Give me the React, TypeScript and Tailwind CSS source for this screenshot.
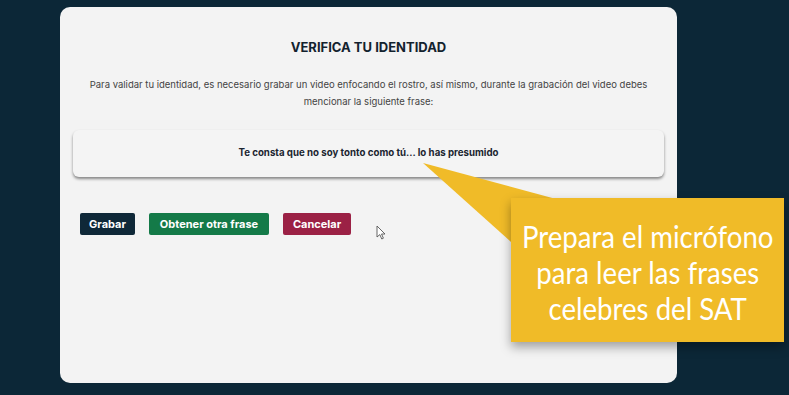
import React from 'react'

const body = { fontFamily: 'Inter, "Noto Sans", sans-serif' }

export default function App() {
  return (
    <div className="relative h-[395px] w-[789px] overflow-hidden bg-[#0c2737] pl-[60px] pt-[7px]" style={body}>
      <div className="flex h-[376px] w-[617px] flex-col rounded-[10px] bg-[#f3f3f3] pt-[31px]">
        <h1 className="text-center text-[13px] font-bold leading-[18px] text-[#13222e]">VERIFICA TU IDENTIDAD</h1>
        <p className="mx-auto mt-[20px] w-[570px] text-center text-[9.5px] leading-[17px] text-[#444]">
          Para validar tu identidad, es necesario grabar un video enfocando el rostro, así mismo, durante la grabación del video debes mencionar la siguiente frase:
        </p>
        <div className="mx-[13px] mt-[20px] flex h-[47px] items-center justify-center rounded-[6px] bg-[#f4f4f4] shadow-[0_2px_3px_rgba(0,0,0,0.45)]">
          <span className="text-[9.7px] font-bold text-[#1b2530]">Te consta que no soy tonto como tú... lo has presumido</span>
        </div>
        <div className="ml-[20px] mt-[36px] flex gap-[14px]">
          <button className="h-[22px] w-[55px] rounded-[2px] bg-[#0f2838] text-[11px] font-bold text-white">Grabar</button>
          <button className="h-[22px] w-[120px] rounded-[2px] bg-[#147a48] text-[11px] font-bold text-white">Obtener otra frase</button>
          <button className="h-[22px] w-[68px] rounded-[2px] bg-[#9b2145] text-[11px] font-bold text-white">Cancelar</button>
        </div>
      </div>

      {/* mouse cursor */}
      <svg className="absolute left-[376px] top-[225px]" width="10" height="15" viewBox="0 0 10 15">
        <path d="M1 1 L1 12 L3.8 9.6 L5.8 14 L7.4 13.2 L5.5 9 L9 9 Z" fill="#fff" stroke="#555" strokeWidth="0.9" strokeLinejoin="round" />
      </svg>

      {/* callout */}
      <svg className="absolute left-0 top-0" width="789" height="395">
        <polygon points="423,163 556,199 511,242" fill="#f0bb28" />
      </svg>
      <div
        className="absolute left-[511px] top-[198px] flex h-[144px] w-[273px] flex-col items-center justify-center bg-[#f0bb28] pt-[4px] shadow-[0_5px_10px_rgba(0,0,0,0.35)]"
        style={{ fontFamily: 'Lato, "Noto Sans", sans-serif' }}
      >
        <div className="flex scale-x-[0.92] flex-col items-center whitespace-nowrap text-[30px] leading-[36px] text-white">
          <span>Prepara el micrófono</span>
          <span>para leer las frases</span>
          <span>celebres del SAT</span>
        </div>
      </div>
    </div>
  )
}
